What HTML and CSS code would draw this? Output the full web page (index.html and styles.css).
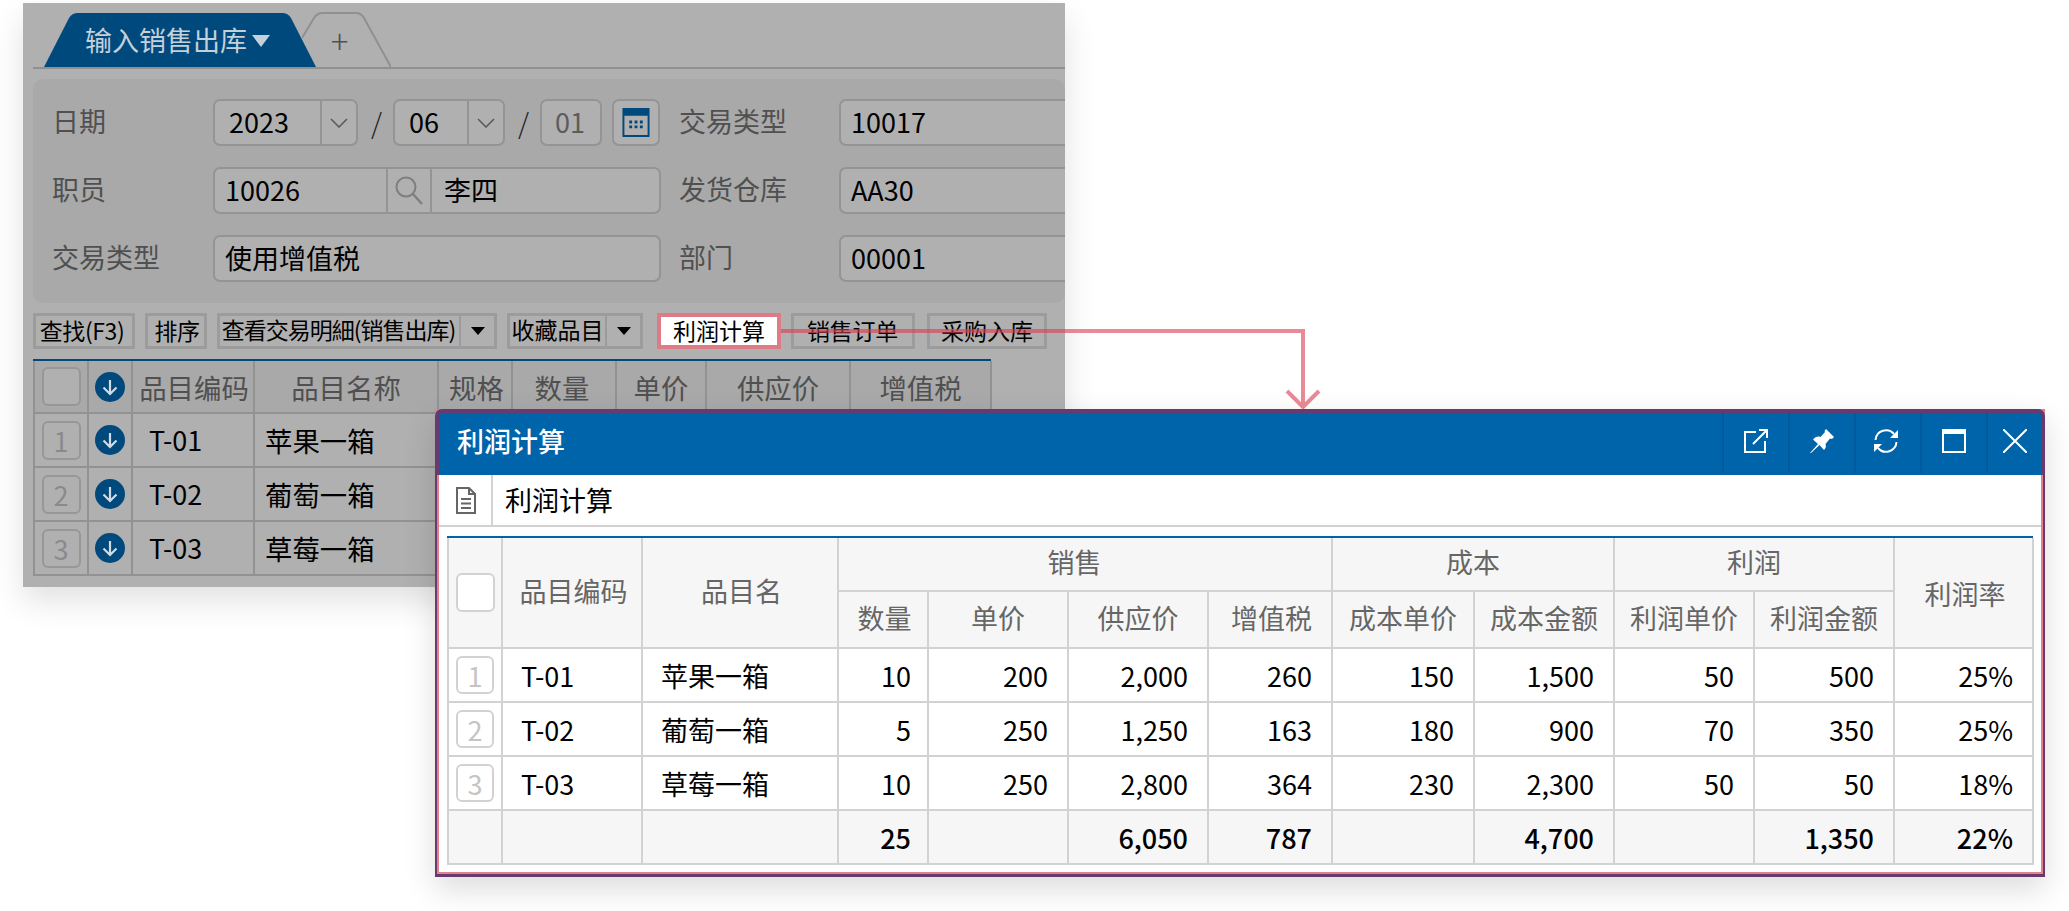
FILE: index.html
```html
<!DOCTYPE html>
<html lang="zh-CN">
<head>
<meta charset="utf-8">
<title>利润计算</title>
<link rel="stylesheet" href="styles.css">
</head>
<body>
<div class="stage">
  <section class="page">
    <div class="tabstrip">
      <div class="tab tab-active">
        <svg class="tab-shape" viewBox="0 0 272 54"><path d="M0 54 25 5Q28 0 34 0H238Q244 0 247 5L272 54Z" fill="#00497d"/></svg>
        <span class="tab-label">输入销售出库</span>
        <svg class="tab-caret" viewBox="0 0 18 12"><path d="M0 0H18L9 12Z" fill="#c4d0da"/></svg>
      </div>
      <div class="tab tab-add">
        <svg class="tab-shape" viewBox="0 0 89 55"><path d="M0 26 12 6Q15 1 21 1H54Q59 1 62 6L89 55" fill="none" stroke="#909090" stroke-width="2"/></svg>
        <span class="tab-plus">+</span>
      </div>
    </div>

    <div class="panel">
      <span class="label">日期</span>
      <div class="date">
        <div class="field field-year"><span class="val val-date">2023</span><span class="drop"><svg class="chev" viewBox="0 0 18 10"><path d="M1 1 9 9 17 1" fill="none" stroke="#5a5a5a" stroke-width="1.6"/></svg></span></div>
        <span class="slash">/</span>
        <div class="field field-month"><span class="val val-date">06</span><span class="drop"><svg class="chev" viewBox="0 0 18 10"><path d="M1 1 9 9 17 1" fill="none" stroke="#5a5a5a" stroke-width="1.6"/></svg></span></div>
        <span class="slash">/</span>
        <div class="field field-day"><span class="val val-muted">01</span></div>
        <div class="field field-cal">
          <svg class="cal" viewBox="0 0 28 30"><path d="M0 0H28V30H0Z" fill="#00497d"/><path d="M2 8H26V28H2Z" fill="#b0b0b0"/><path d="M7 13h3v3H7zM12.500 13h3v3h-3zM18 13h3v3h-3zM7 18h3v3H7zM12.500 18h3v3h-3zM18 18h3v3h-3z" fill="#00497d"/></svg>
        </div>
      </div>
      <span class="label">交易类型</span>
      <div class="field field-wide"><span class="val">10017</span></div>

      <span class="label">职员</span>
      <div class="field field-staff">
        <span class="val val-code">10026</span>
        <span class="lens"><svg class="lens-icon" viewBox="0 0 28 29"><circle cx="11" cy="11" r="9.500" fill="none" stroke="#7e7e7e" stroke-width="2"/><path d="M18 18 27 28" stroke="#7e7e7e" stroke-width="2.400"/></svg></span>
        <span class="val val-name">李四</span>
      </div>
      <span class="label">发货仓库</span>
      <div class="field field-wide"><span class="val">AA30</span></div>

      <span class="label">交易类型</span>
      <div class="field"><span class="val">使用增值税</span></div>
      <span class="label">部门</span>
      <div class="field field-wide"><span class="val">00001</span></div>
    </div>

    <div class="toolbar">
      <button class="btn w-find">查找(F3)</button>
      <button class="btn w-sort">排序</button>
      <div class="btn-split w-detail"><span class="btn-main">查看交易明細(销售出库)</span><span class="btn-arrow"><i class="caret"></i></span></div>
      <div class="btn-split w-fav"><span class="btn-main">收藏品目</span><span class="btn-arrow"><i class="caret"></i></span></div>
      <button class="btn btn-hot">利润计算</button>
      <button class="btn w-order">销售订单</button>
      <button class="btn w-buy">采购入库</button>
    </div>

    <div class="grid-back">
      <table class="tbl-back">
        <colgroup><col class="b1"><col class="b2"><col class="b3"><col class="b4"><col class="b5"><col class="b6"><col class="b7"><col class="b8"><col class="b9"></colgroup>
        <thead>
          <tr>
            <th><span class="ck ck-back"></span></th>
            <th><span class="dl"><svg viewBox="0 0 30 30"><path d="M15 8V22M8.500 15.500 15 22 21.500 15.500" fill="none" stroke="#d0dbe4" stroke-width="2.200"/></svg></span></th>
            <th>品目编码</th><th>品目名称</th><th>规格</th><th>数量</th><th>单价</th><th>供应价</th><th>增值税</th>
          </tr>
        </thead>
        <tbody>
          <tr>
            <td><span class="ck ck-back">1</span></td>
            <td class="c"><span class="dl"><svg viewBox="0 0 30 30"><path d="M15 8V22M8.500 15.500 15 22 21.500 15.500" fill="none" stroke="#d0dbe4" stroke-width="2.200"/></svg></span></td>
            <td class="code">T-01</td><td class="name">苹果一箱</td><td></td><td></td><td></td><td></td><td></td>
          </tr>
          <tr>
            <td><span class="ck ck-back">2</span></td>
            <td class="c"><span class="dl"><svg viewBox="0 0 30 30"><path d="M15 8V22M8.500 15.500 15 22 21.500 15.500" fill="none" stroke="#d0dbe4" stroke-width="2.200"/></svg></span></td>
            <td class="code">T-02</td><td class="name">葡萄一箱</td><td></td><td></td><td></td><td></td><td></td>
          </tr>
          <tr>
            <td><span class="ck ck-back">3</span></td>
            <td class="c"><span class="dl"><svg viewBox="0 0 30 30"><path d="M15 8V22M8.500 15.500 15 22 21.500 15.500" fill="none" stroke="#d0dbe4" stroke-width="2.200"/></svg></span></td>
            <td class="code">T-03</td><td class="name">草莓一箱</td><td></td><td></td><td></td><td></td><td></td>
          </tr>
        </tbody>
      </table>
    </div>
  </section>

  <svg class="connector" viewBox="0 0 2069 911"><path d="M781 331H1303V407M1287 391 1303 407 1319 391" fill="none" stroke="#dc3c50" stroke-opacity=".6" stroke-width="4"/></svg>

  <section class="dialog">
    <div class="win">
      <header class="win-head">
        <h1 class="win-title">利润计算</h1>
        <div class="win-tools">
          <span class="tool"><svg viewBox="0 0 24 24"><path d="M12 3H1V23H21V12" fill="none" stroke="#fff" stroke-width="2"/><path d="M9 15 23 1M15 1H23V9" fill="none" stroke="#fff" stroke-width="2"/></svg></span>
          <span class="tool"><svg viewBox="0 0 24 24"><path d="M16 0 24 8 22 10 20 9.500 15.500 15C16.500 17.500 15.500 19.500 14 21L9.500 16 1 24 0 24 8 15 3 10.500C5 8 8 7 10.500 8L15 3 14.500 2Z" fill="#fff"/></svg></span>
          <span class="tool tool-sync"><svg viewBox="0 0 24 24"><path d="M1.500 11A10.500 10.500 0 0 1 20 5M22.500 13A10.500 10.500 0 0 1 4 19" fill="none" stroke="#fff" stroke-width="2"/><path d="M24 1V9H16ZM0 23V15H8Z" fill="#fff"/></svg></span>
          <span class="tool"><svg viewBox="0 0 24 24"><path d="M0 0H24V24H0ZM2 5V22H22V5Z" fill="#fff" fill-rule="evenodd"/></svg></span>
          <span class="tool tool-last"><svg viewBox="0 0 24 24"><path d="M0 0 24 24M24 0 0 24" stroke="#fff" stroke-width="2"/></svg></span>
        </div>
      </header>
      <div class="win-body">
        <div class="subbar">
          <span class="sub-icon"><svg viewBox="0 0 20 27"><path d="M1 1H13L19 7V26H1Z" fill="none" stroke="#666" stroke-width="2"/><path d="M13 1V7H19M5 12H15M5 16.500H15M5 21H15" fill="none" stroke="#666" stroke-width="2"/></svg></span>
          <span class="sub-title">利润计算</span>
        </div>
        <div class="grid-front">
          <table class="tbl-front">
            <colgroup><col class="f1"><col class="f2"><col class="f3"><col class="f4"><col class="f5"><col class="f6"><col class="f7"><col class="f8"><col class="f9"><col class="f10"><col class="f11"><col class="f12"></colgroup>
            <thead>
              <tr class="r-group">
                <th rowspan="2"><span class="ck ck-head"></span></th>
                <th rowspan="2" class="up">品目编码</th>
                <th rowspan="2" class="up">品目名</th>
                <th colspan="4" class="grp grp-sales">销售</th>
                <th colspan="2" class="grp">成本</th>
                <th colspan="2" class="grp">利润</th>
                <th rowspan="2" class="rate">利润率</th>
              </tr>
              <tr class="r-sub">
                <th class="qty">数量</th><th>单价</th><th>供应价</th><th class="vat">增值税</th><th>成本单价</th><th>成本金额</th><th>利润单价</th><th>利润金额</th>
              </tr>
            </thead>
            <tbody>
              <tr>
                <td class="c"><span class="ck">1</span></td><td class="txt">T-01</td><td class="txt">苹果一箱</td>
                <td class="n n-qty">10</td><td class="n">200</td><td class="n">2,000</td><td class="n">260</td><td class="n">150</td><td class="n">1,500</td><td class="n">50</td><td class="n">500</td><td class="n">25%</td>
              </tr>
              <tr>
                <td class="c"><span class="ck">2</span></td><td class="txt">T-02</td><td class="txt">葡萄一箱</td>
                <td class="n n-qty">5</td><td class="n">250</td><td class="n">1,250</td><td class="n">163</td><td class="n">180</td><td class="n">900</td><td class="n">70</td><td class="n">350</td><td class="n">25%</td>
              </tr>
              <tr>
                <td class="c"><span class="ck">3</span></td><td class="txt">T-03</td><td class="txt">草莓一箱</td>
                <td class="n n-qty">10</td><td class="n">250</td><td class="n">2,800</td><td class="n">364</td><td class="n">230</td><td class="n">2,300</td><td class="n">50</td><td class="n">50</td><td class="n">18%</td>
              </tr>
            </tbody>
            <tfoot>
              <tr>
                <td></td><td></td><td></td>
                <td class="n n-qty">25</td><td></td><td class="n">6,050</td><td class="n">787</td><td></td><td class="n">4,700</td><td></td><td class="n">1,350</td><td class="n">22%</td>
              </tr>
            </tfoot>
          </table>
        </div>
      </div>
    </div>
  </section>
</div>
</body>
</html>
```
FILE: styles.css
```css
* { box-sizing: border-box; }
html, body { margin: 0; padding: 0; background: #fff; }
body { font-family: "Noto Sans CJK SC", "Noto Sans", sans-serif; font-size: 27px; color: #000; }
.stage { position: relative; width: 2069px; height: 911px; overflow: hidden; background: #fff; }

/* dimmed window behind */
.page {
  position: absolute; left: 23px; top: 3px; width: 1042px; height: 584px;
  background: #b0b0b0; box-shadow: 0 14px 30px rgba(0,0,0,.12);
  overflow: hidden; padding: 10px 0 0 10px;
}
.tabstrip { display: flex; height: 56px; width: 1032px; padding-left: 11px; border-bottom: 2px solid #909090; }
.tab { position: relative; }
.tab-shape { position: absolute; left: 0; top: 0; width: 100%; height: 100%; }
.tab-active { width: 272px; height: 54px; z-index: 1; display: flex; align-items: center; padding-left: 41px; }
.tab-label { position: relative; color: #c4d0da; font-size: 27px; line-height: 54px; }
.tab-caret { position: relative; width: 18px; height: 12px; margin: 2px 0 0 5px; }
.tab-add { width: 89px; height: 55px; margin-left: -14px; margin-top: -1px; text-align: center; }
.tab-plus { position: relative; display: block; color: #505050; font-size: 33px; line-height: 56px; font-weight: 300; padding-right: 14px; }

.panel {
  margin-top: 10px; width: 1032px; height: 224px; padding: 20px 0 0 21px;
  background: #a9a9a9; border-radius: 10px; overflow: hidden;
  display: grid; grid-template-columns: 140px 448px 140px 300px; column-gap: 19px; row-gap: 21px;
  grid-auto-rows: 47px; align-items: center;
}
.label { color: #505050; font-size: 27px; line-height: 43px; height: 47px; white-space: nowrap; margin-left: -2px; }
.label:nth-child(4n+3) { margin-left: -1px; }
.field {
  display: flex; align-items: center; height: 47px; background: #b0b0b0;
  border: 2px solid #949494; border-radius: 7px; overflow: hidden;
}
.val { padding-left: 10px; line-height: 41px; height: 43px; white-space: nowrap; font-size: 27px; }
.val-date { flex: 1; padding-left: 14px; }
.val-muted { padding-left: 13px; color: #5c5c5c; }
.val-code { width: 171px; }
.val-name { flex: 1; padding-left: 12px; }
.date { display: flex; align-items: center; }
.field-year { width: 145px; }
.field-month { width: 112px; }
.field-day { width: 62px; }
.field-cal { width: 48px; margin-left: 10px; justify-content: center; }
.field-wide { width: 320px; border-right: 0; border-radius: 7px 0 0 7px; }
.drop { width: 36px; height: 100%; border-left: 2px solid #949494; display: flex; align-items: center; justify-content: center; }
.chev { width: 18px; height: 10px; }
.slash { width: 35px; text-align: center; color: #222; font-size: 28px; font-weight: 300; line-height: 43px; padding-left: 2px; }
.cal { width: 28px; height: 29px; }
.lens { width: 46px; height: 100%; border-left: 2px solid #949494; border-right: 2px solid #949494; display: flex; align-items: center; justify-content: center; }
.lens-icon { width: 28px; height: 29px; }

.toolbar { display: flex; gap: 10px; margin-top: 10px; height: 36px; width: 1032px; }
.btn, .btn-split {
  height: 36px; margin: 0; padding: 0 0 3px; background: #b0b0b0; border: 3px solid #9c9c9c;
  font-family: inherit; font-size: 23px; line-height: 26px; color: #000; text-align: center; white-space: nowrap;
}
.btn-split { display: flex; padding: 0; }
.btn-main { flex: 1; }
.btn-arrow { width: 35px; border-left: 2px solid #9c9c9c; display: flex; align-items: center; justify-content: center; }
.caret { width: 0; height: 0; border-style: solid; border-width: 8px 7px 0; border-color: #000 transparent transparent; }
.w-find { width: 102px; letter-spacing: -.4px; padding-right: 4px; }
.w-sort { width: 62px; letter-spacing: -.5px; padding-left: 2px; }
.w-detail { width: 280px; }
.w-detail .btn-main { letter-spacing: -1px; padding-right: 2px; }
.w-fav { width: 136px; }
.btn-hot { width: 124px; margin-left: 4px; background: #fff; border: 4px solid #dd7b86; padding-bottom: 4px; }
.w-order { width: 124px; letter-spacing: -.3px; padding-right: 1px; }
.w-buy { width: 120px; margin-left: 2px; }

.grid-back { margin-top: 10px; width: 958px; border-top: 2px solid #00497d; }
.tbl-back, .tbl-front { border-collapse: collapse; table-layout: fixed; }
.tbl-back { width: 957px; }
.b1 { width: 54px; } .b2 { width: 44px; } .b3 { width: 122px; } .b4 { width: 184px; } .b5 { width: 74px; }
.b6 { width: 104px; } .b7 { width: 90px; } .b8 { width: 144px; } .b9 { width: 141px; }
.tbl-back th, .tbl-back td { height: 54px; padding: 0; border: 2px solid #929292; font-size: 27.4px; line-height: 30px; }
.tbl-back th { height: 52px; border-top: 0; background: #a9a9a9; color: #505050; font-weight: 400; text-align: center; }
.tbl-back th:nth-child(3) { padding-left: 2px; }
.tbl-back th:nth-child(5) { padding-left: 3px; }
.tbl-back th:nth-child(6) { padding-right: 4px; }
.tbl-back td { background: #b0b0b0; }
.tbl-back .code { padding-left: 16px; font-size: 27px; }
.tbl-back .name { padding-left: 10px; }
.c { text-align: center; }
.ck {
  display: block; width: 38px; height: 38px; margin: 0 auto; border: 2px solid #d2d2d2; border-radius: 6px;
  background: #fff; color: #c4c4c4; font-size: 27px; line-height: 35px; text-align: center;
}
.ck-back { width: 39px; height: 39px; background: #b0b0b0; border-color: #979797; color: #8a8a8a; }
.dl { display: block; width: 30px; height: 30px; margin: 0 auto; border-radius: 50%; background: #00497d; }
.dl svg { display: block; width: 30px; height: 30px; }

.connector { position: absolute; left: 0; top: 0; width: 2069px; height: 911px; pointer-events: none; }

/* dialog */
.dialog {
  position: absolute; left: 435px; top: 409px; width: 1610px; height: 468px;
  background: #e2808c; box-shadow: 0 12px 30px rgba(0,0,0,.14);
}
.win { height: 100%; border: 2px solid #693a6e; border-bottom-width: 3px; border-radius: 7px 7px 0 0; display: flex; flex-direction: column; overflow: hidden; background: #693a6e; }
.win-head { height: 64px; flex: none; display: flex; align-items: stretch; justify-content: space-between; background: #0064ab; border: 2px solid #693a6e; border-bottom: 0; border-radius: 4px 4px 0 0; }
.win-title { margin: 0; padding-left: 18px; font-size: 27px; font-weight: 500; color: #fff; line-height: 56px; }
.win-tools { display: flex; padding-bottom: 2px; }
.tool { width: 66px; border-left: 2px solid #005a9c; display: flex; align-items: center; justify-content: center; }
.tool svg { width: 24px; height: 24px; margin-bottom: 4px; }
.tool-sync svg { margin-right: 4px; }
.tool-last { width: 55px; }
.win-body { flex: 1; min-height: 0; background: #fff; border: 2px solid #e2808c; border-top: 0; }
.subbar { height: 52px; display: flex; align-items: stretch; border-bottom: 2px solid #d2d2d2; }
.sub-icon { width: 54px; border-right: 2px solid #d2d2d2; display: flex; align-items: center; justify-content: center; padding-left: 2px; }
.sub-icon svg { width: 20px; height: 27px; }
.sub-title { padding-left: 12px; line-height: 50px; font-size: 27px; }
.grid-front { margin: 9px 0 0 8px; width: 1586px; border-top: 2px solid #0064ab; }
.tbl-front { width: 1585px; }
.f1 { width: 54px; } .f2 { width: 140px; } .f3 { width: 196px; } .f4 { width: 90px; } .f5 { width: 140px; } .f6 { width: 140px; }
.f7 { width: 124px; } .f8 { width: 142px; } .f9 { width: 140px; } .f10 { width: 140px; } .f11 { width: 140px; } .f12 { width: 139px; }
.tbl-front th, .tbl-front td { padding: 0; border: 2px solid #d2d2d2; font-size: 27px; line-height: 30px; }
.tbl-front th { background: #f6f6f6; color: #666; font-weight: 400; text-align: center; }
.tbl-front thead tr:first-child th { border-top: 0; }
.r-group th { height: 53px; }
.r-sub th { height: 57px; padding-bottom: 3px; }
.tbl-front th.grp { padding-bottom: 5px; }
.tbl-front th.grp-sales { padding-right: 21px; }
.tbl-front th.up { padding: 0 0 3px 3px; }
.tbl-front th.rate { padding: 2px 0 0 3px; }
.tbl-front th.qty { padding-left: 3px; }
.tbl-front th.vat { padding-left: 3px; }
.tbl-front td { height: 54px; padding-top: 2px; }
.tbl-front td.c { padding-top: 0; }
.tbl-front .n { text-align: right; padding-right: 19px; }
.tbl-front .n-qty { padding-right: 16px; }
.tbl-front .txt { padding-left: 18px; }
.tbl-front tfoot td { background: #f6f6f6; font-weight: 500; }
.ck-head { width: 39px; height: 39px; }
```
